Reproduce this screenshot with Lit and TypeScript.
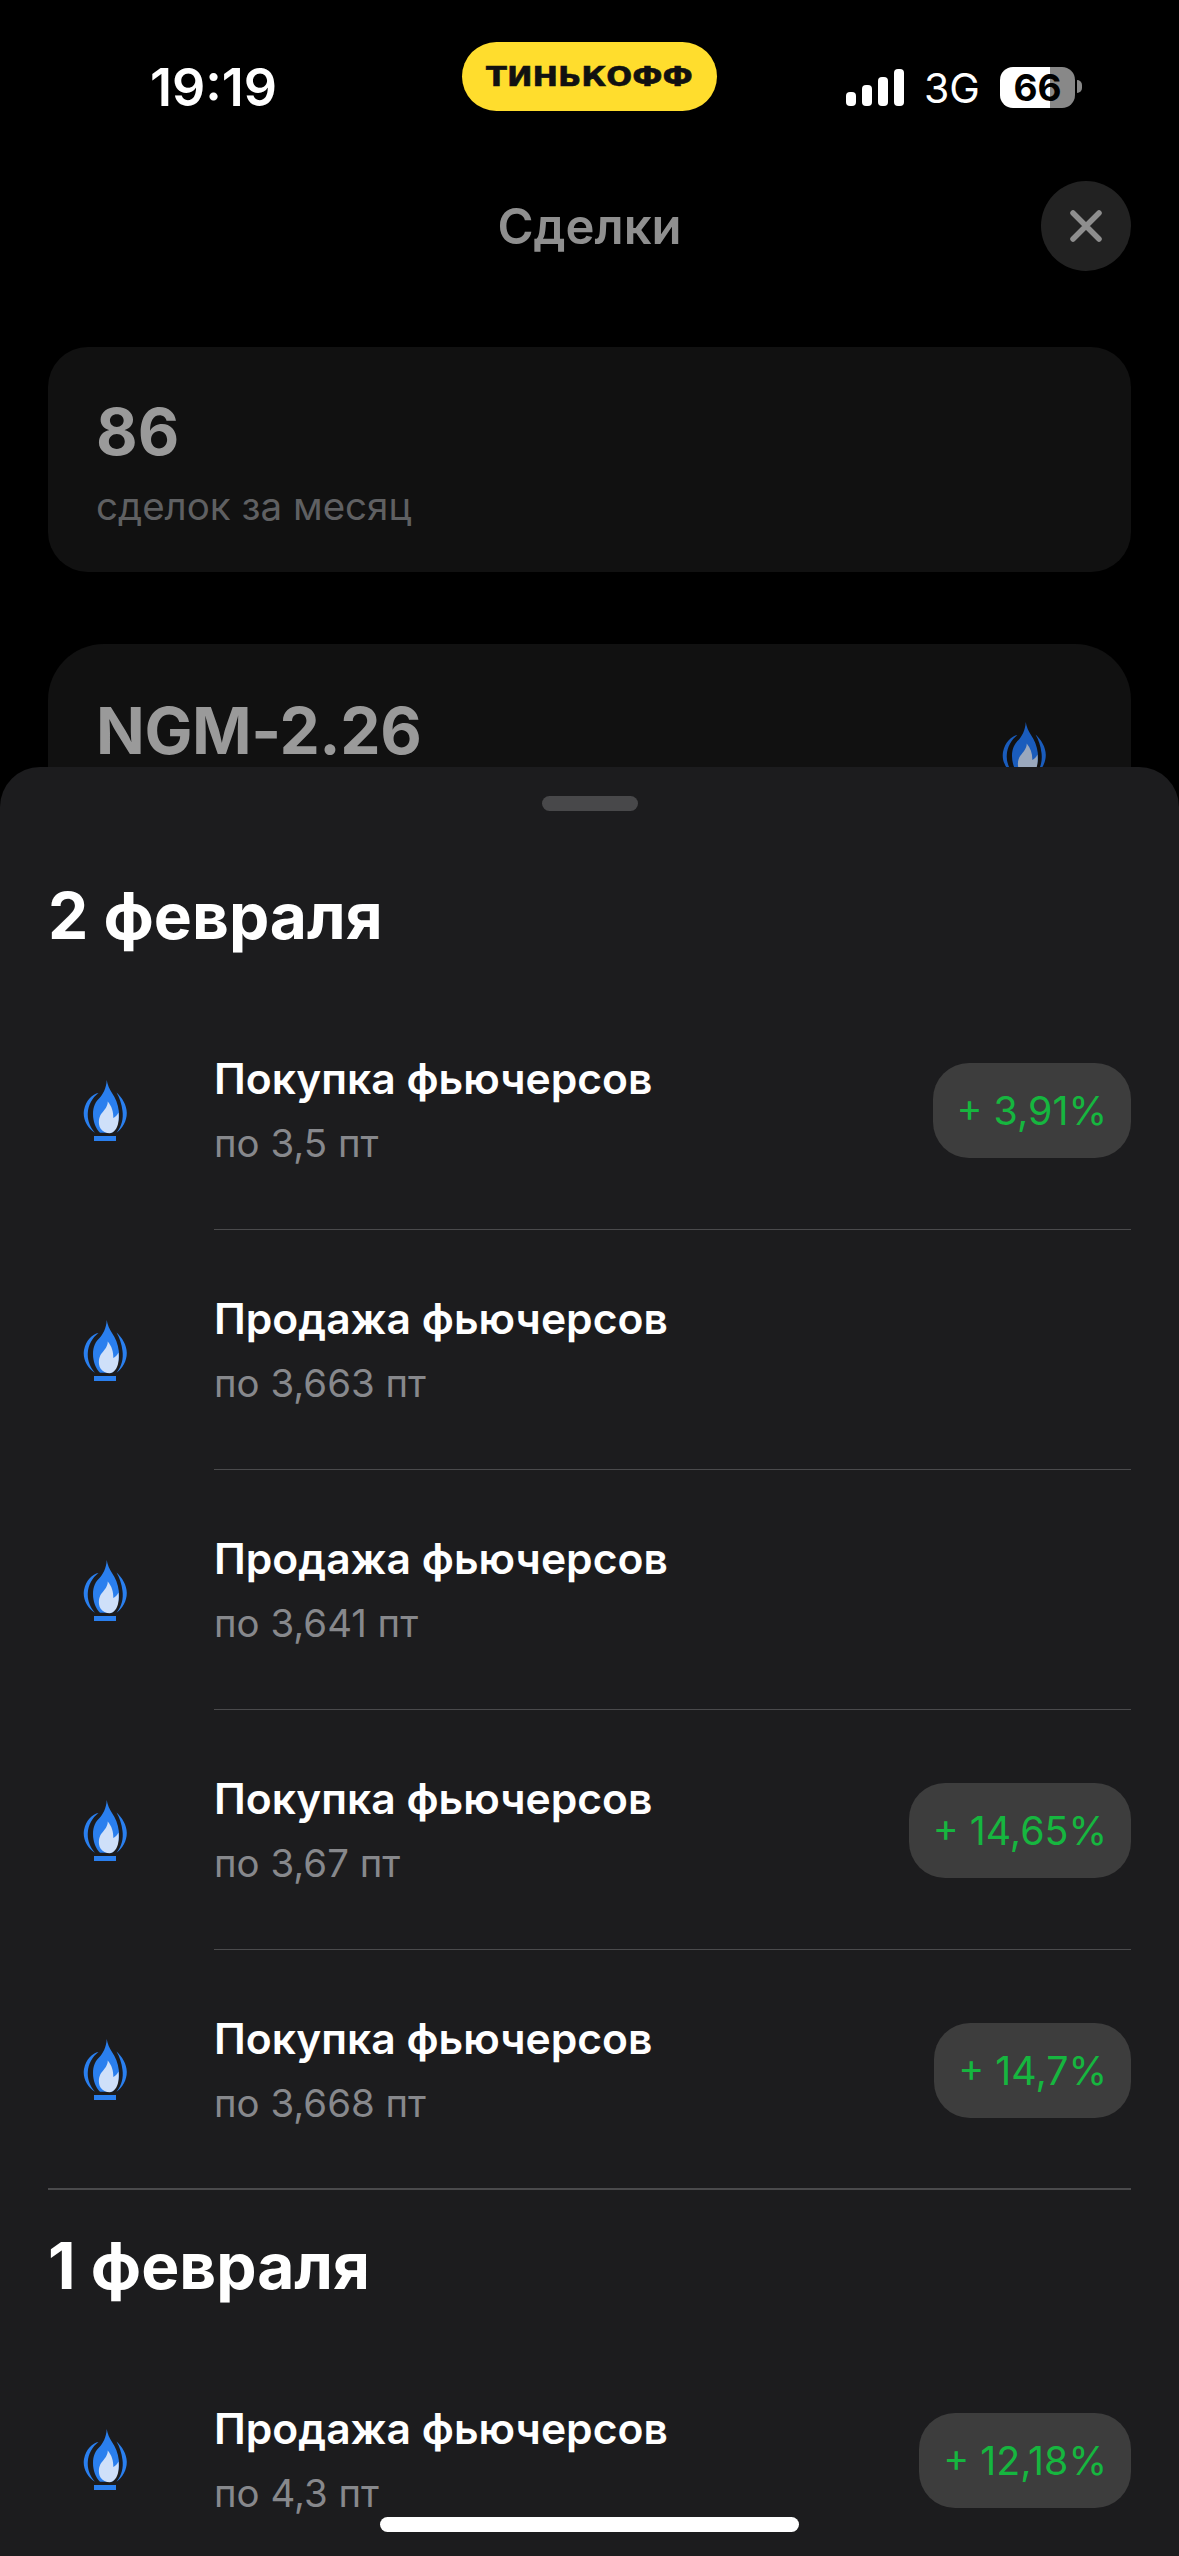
import { LitElement, html, css, svg } from 'lit';
import { customElement } from 'lit/decorators.js';

type Deal = { title: string; price: string; profit?: string };
type Day = { date: string; deals: Deal[] };

const BUY = 'Покупка фьючерсов';
const SELL = 'Продажа фьючерсов';

const days: Day[] = [
  {
    date: '2 февраля',
    deals: [
      { title: BUY, price: 'по 3,5 пт', profit: '+ 3,91%' },
      { title: SELL, price: 'по 3,663 пт' },
      { title: SELL, price: 'по 3,641 пт' },
      { title: BUY, price: 'по 3,67 пт', profit: '+ 14,65%' },
      { title: BUY, price: 'по 3,668 пт', profit: '+ 14,7%' },
    ],
  },
  {
    date: '1 февраля',
    deals: [{ title: SELL, price: 'по 4,3 пт', profit: '+ 12,18%' }],
  },
];

const flame = (blue: string, pale: string) => svg`
  <svg class="flame" width="44" height="61" viewBox="0 0 44 61">
    <path fill=${blue} d="M23.700 0C24.500 5 26.500 9 29 13C32.500 18 35 24 35.800 31C36.500 39 35 47 29 52.700H17C12.500 48.500 10 41 10 34C10 27 12.500 21.500 16.500 18C19.500 15 23.500 8 23.700 0Z"/>
    <path fill=${blue} d="M15.500 13C9.500 14 3 20 1 30C-.5 39 4 47.500 12 52.700C7 47 4.300 40 4.800 33C5.300 25 9 18 15.500 13Z"/>
    <path fill=${blue} d="M33.500 12.500C39 17.500 43.800 25 43.800 33C43.800 41 39.500 48.500 33.500 52.700C38.800 46.500 40.500 38.500 39.500 31C38.700 24 36.500 17.500 33.500 12.500Z"/>
    <path fill=${pale} d="M24.700 21.500C25 26 21.500 30 18.500 33.500C15.500 37.500 15 44 17.500 48.500C19.500 51.500 23 53.300 27 53.300C31 52.500 34 49 35.200 43C35.900 39 35.900 35.500 35.400 32.500C34.500 35 32.500 37 30.300 38C30.500 32 28.700 26 24.700 21.500Z"/>
    <rect x="11" y="56" width="22" height="5" fill=${blue}/>
  </svg>
`;

@customElement('app-root')
export class AppRoot extends LitElement {
  static styles = css`
    :host {
      display: block;
      position: relative;
      width: 1179px;
      height: 2556px;
      overflow: hidden;
      background: #000;
      font-family: Inter, 'Liberation Sans', sans-serif;
    }

    .status {
      display: grid;
      grid-template-columns: 1fr auto 1fr;
      height: 181px;
      box-sizing: border-box;
      padding-top: 42px;
    }

    .time {
      padding: 16px 0 0 150px;
      color: #fff;
      font-size: 52px;
      line-height: 60px;
      font-weight: 600;
    }

    .brand {
      display: flex;
      align-items: center;
      justify-content: center;
      width: 255px;
      height: 69px;
      border-radius: 35px;
      background: #ffdd2d;
      color: #111;
      font-family: 'DejaVu Sans', sans-serif;
      font-size: 27px;
      font-weight: 700;
    }

    .brand span {
      display: inline-block;
      transform: scaleX(1.13);
      -webkit-text-stroke: 0.6px #111;
    }

    .indicators {
      display: flex;
      align-items: flex-start;
      padding: 25px 0 0 129px;
    }

    .signal {
      display: block;
      margin-top: 2px;
    }

    .network {
      margin-left: 20px;
      color: #fff;
      font-size: 41px;
      line-height: 42px;
      font-weight: 400;
    }

    .battery {
      display: flex;
      align-items: center;
      justify-content: center;
      width: 75px;
      height: 41px;
      margin-left: 20px;
      border-radius: 13px;
      background: linear-gradient(90deg, #fff 50px, #888 50px);
      color: #000;
      font-size: 37px;
      font-weight: 700;
    }

    .nub {
      width: 5px;
      height: 13px;
      margin: 13px 0 0 2px;
      border-radius: 0 6px 6px 0;
      background: #888;
    }

    .header {
      display: grid;
      grid-template-columns: 1fr auto 1fr;
      align-items: center;
      height: 90px;
      padding: 0 48px;
    }

    .title {
      grid-column: 2;
      color: #8f8f8f;
      font-size: 49px;
      font-weight: 600;
    }

    .close {
      justify-self: end;
      display: flex;
      align-items: center;
      justify-content: center;
      width: 90px;
      height: 90px;
      border-radius: 50%;
      background: #222;
    }

    .card {
      margin: 0 48px;
      padding: 47px 48px;
      border-radius: 40px;
      background: #111;
    }

    .stats {
      box-sizing: border-box;
      height: 225px;
      margin-top: 76px;
    }

    .stats-value,
    .ticker-name {
      color: #9a9a9a;
      font-size: 64px;
      line-height: 76px;
      font-weight: 700;
    }

    .ticker-name {
      letter-spacing: -0.4px;
    }

    .stats-label {
      margin-top: 13px;
      color: #5f6062;
      font-size: 38.500px;
      line-height: 46px;
    }

    .ticker {
      display: flex;
      justify-content: space-between;
      margin-top: 72px;
      padding-top: 49px;
      padding-right: 85px;
      height: 300px;
      box-sizing: border-box;
      border-radius: 56px;
    }

    .ticker .flame {
      margin-top: 29px;
    }

    .sheet {
      position: absolute;
      top: 767px;
      left: 0;
      right: 0;
      bottom: 0;
      overflow: hidden;
      border-radius: 40px 40px 0 0;
      background: #1c1c1e;
    }

    .grabber {
      width: 96px;
      height: 15px;
      margin: 29px auto;
      border-radius: 8px;
      background: #48484a;
    }

    .day {
      margin: 0 48px;
      border-bottom: 2px solid #4a4a4c;
    }

    .day-title {
      display: flex;
      align-items: center;
      height: 150px;
      color: #fff;
      font-size: 64px;
      font-weight: 700;
    }

    .deal {
      display: flex;
      align-items: center;
      height: 240px;
      box-sizing: border-box;
    }

    .deal:last-child {
      height: 238px;
    }

    .deal-icon {
      display: flex;
      flex: none;
      width: 166px;
      padding-left: 35px;
      box-sizing: border-box;
    }

    .deal-body {
      display: flex;
      align-items: center;
      flex: 1;
      align-self: stretch;
      box-sizing: border-box;
      padding-top: 2px;
      border-bottom: 1.500px solid #4a4a4c;
    }

    .deal:last-child .deal-body {
      border-bottom: none;
    }

    .deal-text {
      flex: 1;
      margin-top: -2px;
    }

    .deal-title {
      color: #fff;
      font-size: 42.600px;
      line-height: 52px;
      font-weight: 600;
    }

    .deal-price {
      margin-top: 15px;
      color: #87888c;
      font-size: 38.400px;
      line-height: 46px;
    }

    .profit {
      display: flex;
      align-items: center;
      height: 95px;
      padding: 0 24px;
      border-radius: 36px;
      background: #3d3d3d;
      color: #16b63f;
      font-size: 39.300px;
    }

    .home {
      position: absolute;
      left: 380px;
      top: 2517px;
      width: 419px;
      height: 15px;
      border-radius: 8px;
      background: #fff;
    }
  `;

  renderDeal(deal: Deal) {
    return html`
      <div class="deal">
        <div class="deal-icon">${flame('#2a7fee', '#cfe0f9')}</div>
        <div class="deal-body">
          <div class="deal-text">
            <div class="deal-title">${deal.title}</div>
            <div class="deal-price">${deal.price}</div>
          </div>
          ${deal.profit ? html`<div class="profit">${deal.profit}</div>` : ''}
        </div>
      </div>
    `;
  }

  render() {
    return html`
      <div class="status">
        <div class="time">19:19</div>
        <div class="brand"><span>ТИНЬКОФФ</span></div>
        <div class="indicators">
          <svg class="signal" width="58" height="37" viewBox="0 0 58 37" fill="#fff">
            <rect x="0" y="23" width="10" height="14" rx="4" />
            <rect x="16" y="16" width="10" height="21" rx="4" />
            <rect x="32" y="8" width="10" height="29" rx="4" />
            <rect x="48" y="0" width="10" height="37" rx="4" />
          </svg>
          <span class="network">3G</span>
          <div class="battery">66</div>
          <div class="nub"></div>
        </div>
      </div>

      <div class="header">
        <div class="title">Сделки</div>
        <div class="close">
          <svg width="32" height="32" viewBox="0 0 32 32">
            <path d="M3 3L29 29M29 3L3 29" stroke="#8e8e8e" stroke-width="5.500" stroke-linecap="round" />
          </svg>
        </div>
      </div>

      <div class="card stats">
        <div class="stats-value">86</div>
        <div class="stats-label">сделок за месяц</div>
      </div>

      <div class="card ticker">
        <div class="ticker-name">NGM-2.26</div>
        ${flame('#1a5cbc', '#9aa8bd')}
      </div>

      <div class="sheet">
        <div class="grabber"></div>
        ${days.map(
          (day) => html`
            <section class="day">
              <div class="day-title">${day.date}</div>
              ${day.deals.map((deal) => this.renderDeal(deal))}
            </section>
          `
        )}
      </div>
      <div class="home"></div>
    `;
  }
}
